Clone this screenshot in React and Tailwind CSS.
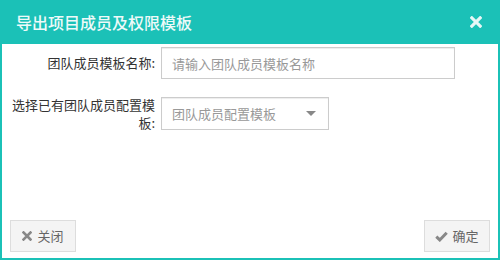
import React from 'react';

const font = { fontFamily: '"Noto Sans CJK SC", "Noto Sans", sans-serif' };

const TimesIcon = ({ className }) => (
  <svg viewBox="0 0 10 10" className={className}>
    <path d="M1.5 1.5 L8.5 8.5 M8.5 1.5 L1.5 8.5" stroke="currentColor" strokeWidth="2.6" strokeLinecap="square" />
  </svg>
);

const CheckIcon = ({ className }) => (
  <svg viewBox="0 0 12 10" className={className}>
    <path d="M1.2 5.2 L4.4 8.2 L10.8 1.6" stroke="currentColor" strokeWidth="2.8" fill="none" />
  </svg>
);

const App = () => {
  return (
    <div className="w-[500px] h-[260px] flex flex-col bg-[#1bc1b7]" style={font}>
      {/* header */}
      <div className="h-[44px] shrink-0 flex items-center justify-between pl-[16px] pr-[18px]">
        <h1 className="text-[16px] font-medium text-[#eefaf9]">导出项目成员及权限模板</h1>
        <TimesIcon className="w-[12px] h-[12px] text-[#e6f7f6]" />
      </div>

      {/* body */}
      <div className="flex-1 mx-[2px] mb-[2px] bg-white flex flex-col px-[8px] pt-[3px] pb-[6px]">
        <div className="flex items-center gap-[6px] h-[32px]">
          <label className="w-[145px] text-right text-[13px] text-[#333]">团队成员模板名称:</label>
          <input
            placeholder="请输入团队成员模板名称"
            className="w-[294px] h-[32px] border border-[#ccc] shadow-[inset_0_1px_1px_rgba(0,0,0,0.075)] px-[10px] text-[13px] text-[#555] placeholder:text-[#999] outline-none"
          />
        </div>

        <div className="flex items-center gap-[6px] mt-[18px] h-[33px]">
          <label className="w-[145px] text-right text-[13px] leading-[18px] text-[#333]">选择已有团队成员配置模板:</label>
          <div className="w-[168px] h-[33px] border border-[#ccc] shadow-[inset_0_1px_1px_rgba(0,0,0,0.075)] flex items-center justify-between pl-[10px] pr-[12px]">
            <span className="text-[13px] text-[#999]">团队成员配置模板</span>
            <span className="w-0 h-0 border-l-[5px] border-r-[5px] border-t-[5px] border-l-transparent border-r-transparent border-t-[#888]" />
          </div>
        </div>

        <div className="mt-auto flex justify-between">
          <button className="w-[66px] h-[32px] bg-[#f4f4f4] border border-[#ddd] flex items-center justify-center gap-[5px] text-[13px] text-[#666]">
            <TimesIcon className="w-[10px] h-[10px] text-[#888]" />
            关闭
          </button>
          <button className="w-[66px] h-[32px] bg-[#f4f4f4] border border-[#ddd] flex items-center justify-center gap-[4px] text-[13px] text-[#666]">
            <CheckIcon className="w-[13px] h-[11px] text-[#888]" />
            确定
          </button>
        </div>
      </div>
    </div>
  );
};

export default App;
